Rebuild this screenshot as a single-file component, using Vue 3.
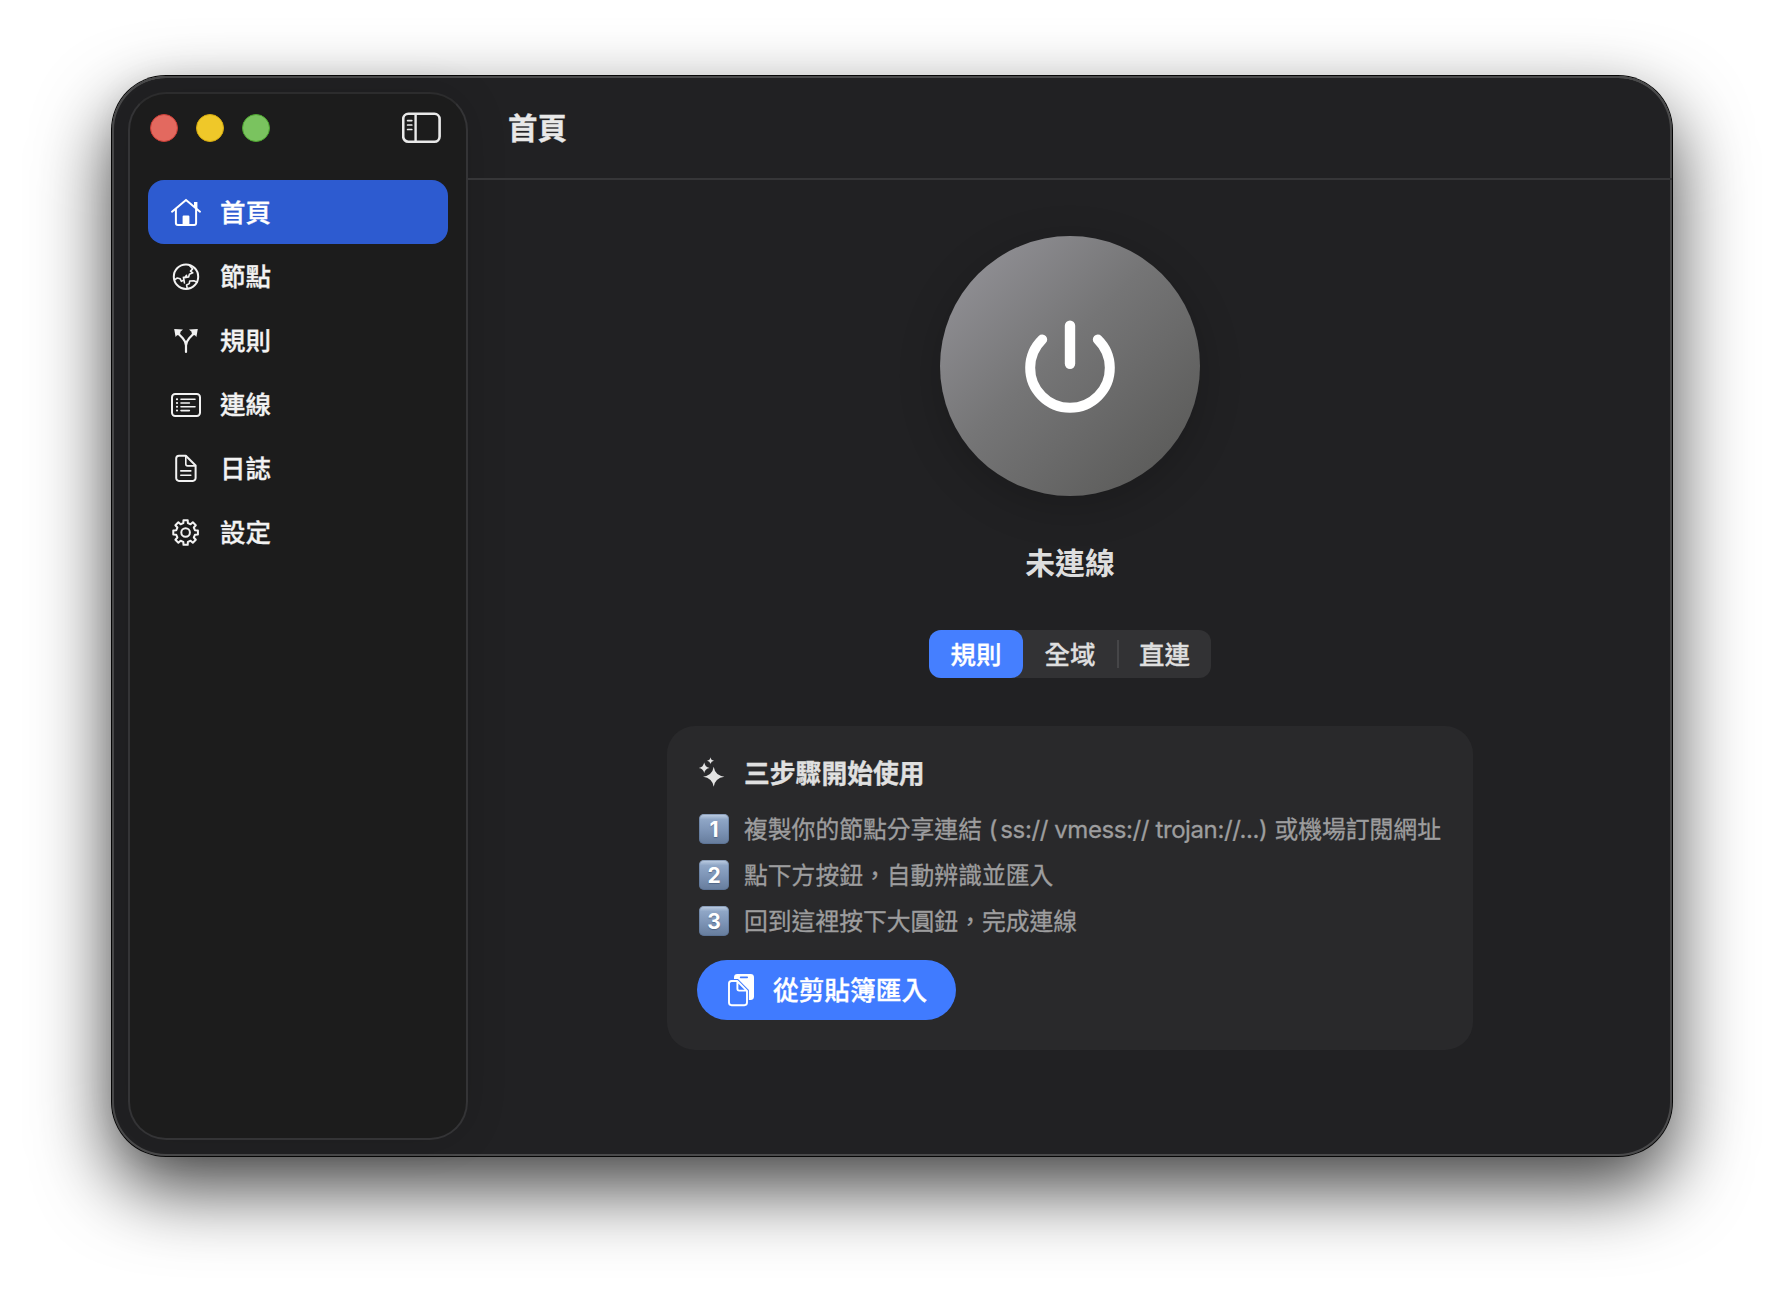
<template>
  <div class="desktop">
    <div class="window">
      <aside class="sidebar">
        <div class="sidebar-top">
          <div class="lights">
            <span class="light red"></span>
            <span class="light yellow"></span>
            <span class="light green"></span>
          </div>
          <button class="toggle-btn">
            <svg viewBox="0 0 40 32" width="40" height="32" fill="none" stroke="#e9e9e9">
              <rect x="1.2" y="1.8" width="36.400" height="28" rx="5.2" stroke-width="2.600" />
              <path d="M13.600 2v27.8" stroke-width="2.4" />
              <path d="M5.600 8.600h4.200M5.600 13h4.200M5.600 17.500h4.200" stroke-width="1.700" stroke-linecap="round" />
            </svg>
          </button>
        </div>

        <nav class="nav">
          <a
            v-for="item in navList"
            :key="item.key"
            class="nav-item"
            :class="{ active: item.key === activeNav }"
            @click="activeNav = item.key"
          >
            <svg class="nav-icon" viewBox="0 -0.5 32 32" width="32" height="32">
              <g v-if="item.key === 'home'">
                <path d="M2 15.2L16 3.4l14 11.800M5.900 12.600v13.800a2 2 0 0 0 2 2h16.2a2 2 0 0 0 2-2V12.600" />
                <path class="solid" d="M12.600 28V20a1 1 0 0 1 1-1h4.800a1 1 0 0 1 1 1v8zM24 5.600h3.400v7.400l-3.400-2.900z" />
              </g>
              <g v-else-if="item.key === 'nodes'">
                <circle cx="16" cy="16.200" r="12.200" />
                <path class="thin" d="M19.300 4.600l3.400 3.800-2.200 2.200 2.300 1.700-3.400 1.400-.8 2.700-4 .7 2-2.300" />
                <path class="thin" d="M4.400 19.400l2.900-1.900 2.800.7 1.300 2.600 2.600-1.300-.6-2.600M14 19.500l.4 3" />
                <path class="thin" d="M17.200 27.800l-.6-3.300 2.700-1.400.4-2.600 4.200-.3 3.200 1.500" />
              </g>
              <g v-else-if="item.key === 'rules'">
                <path class="bold" d="M16 27.400v-6.400c0-3.400-1-4.700-3.200-7.200L8.200 9M16 21c0-3.400 1-4.700 3.200-7.200L23.800 9" />
                <path class="solid" d="M4.200 4.600l8.800.5-2.800 2.500.4.8-2.600 2.500-.8-.4-1.600 1.900zM27.800 4.600l-8.800.5 2.800 2.500-.4.8 2.600 2.500.8-.4 1.600 1.900z" />
              </g>
              <g v-else-if="item.key === 'links'">
                <rect x="2" y="5.600" width="28" height="21.800" rx="3.200" />
                <path d="M11 10.700h14M11 14.500h8.400M11 18.300h14M11 22.100h8.400" class="thin" />
                <path d="M6.900 10.700h.2M6.900 14.500h.2M6.900 18.300h.2M6.900 22.100h.2" class="dots" />
              </g>
              <g v-else-if="item.key === 'logs'">
                <path d="M9 3.200h6.800L25.600 13v12.600a2.800 2.800 0 0 1-2.800 2.800H9a2.800 2.800 0 0 1-2.800-2.800V6A2.800 2.800 0 0 1 9 3.200z" />
                <path d="M15.800 3.600v8a1.800 1.800 0 0 0 1.800 1.800h7.800M10.800 18.400h10M10.800 22.800h10" class="thin" />
              </g>
              <g v-else>
                <path :d="gearPath" />
                <circle cx="15.600" cy="16" r="4.300" />
              </g>
            </svg>
            <span class="nav-label">{{ item.label }}</span>
          </a>
        </nav>
      </aside>

      <main class="main">
        <header class="toolbar">
          <h1>首頁</h1>
        </header>

        <section class="content">
          <button class="power-btn">
            <svg viewBox="0 0 100 100" width="100" height="100" fill="none" stroke="#fff" stroke-linecap="round">
              <path d="M22.200 23.500a39.800 39.800 0 1 0 55.600 0" stroke-width="10" />
              <path d="M50 9.800v38" stroke-width="10.400" />
            </svg>
          </button>

          <div class="status">未連線</div>

          <div class="segmented">
            <button
              v-for="mode in modes"
              :key="mode"
              class="segment"
              :class="{ selected: mode === currentMode }"
              @click="currentMode = mode"
            >{{ mode }}</button>
          </div>

          <div class="card">
            <div class="card-title">
              <svg viewBox="0 0 32 34" width="32" height="34" fill="#e4e4e4">
                <path d="M16.700 12.800q1.300 8.600 10.700 9.900-9.400 1.300-10.700 10.100Q15.400 24 6 22.700q9.400-1.300 10.700-9.900z" />
                <path d="M7.200 8.200q.7 5 5.400 5.700-4.700.7-5.400 5.100-.7-4.400-5.400-5.100 4.700-.7 5.400-5.700z" />
                <path d="M13.500 3.300q.4 3 3.500 3.500-3.100.5-3.500 3.400-.4-2.900-3.500-3.400 3.100-.5 3.500-3.500z" />
              </svg>
              <span>三步驟開始使用</span>
            </div>

            <div v-for="(step, index) in steps" :key="index" class="step">
              <span class="badge">{{ index + 1 }}</span>
              <span class="step-text"><span v-for="(part, i) in step" :key="i" :class="{ latin: i === 2 }">{{ part }}</span></span>
            </div>

            <button class="import-btn">
              <svg viewBox="0 0 30 36" width="30" height="36">
                <rect x="8" y="2" width="20" height="26" rx="3.400" fill="#fff" />
                <path d="M14.600 5.400h6.600" stroke="#407bff" stroke-width="1.600" stroke-linecap="round" />
                <path
                  d="M5.600 9h5.600l9.800 9.800v11.800a2.600 2.600 0 0 1-2.600 2.600H5.600A2.600 2.600 0 0 1 3 30.600v-19A2.600 2.600 0 0 1 5.600 9z"
                  fill="#407bff" stroke="#407bff" stroke-width="3.800"
                />
                <path
                  d="M5.600 9h5.600l9.800 9.800v11.800a2.600 2.600 0 0 1-2.600 2.600H5.600A2.600 2.600 0 0 1 3 30.600v-19A2.600 2.600 0 0 1 5.600 9zM11.400 9.400v7.400a1.800 1.800 0 0 0 1.800 1.800h7.400"
                  fill="none" stroke="#fff" stroke-width="1.900" stroke-linejoin="round"
                />
              </svg>
              <span class="import-label">從剪貼簿匯入</span>
            </button>
          </div>
        </section>
      </main>
    </div>
  </div>
</template>

<script setup>
import { ref } from 'vue'

const activeNav = ref('home')

const navList = [
  { key: 'home', label: '首頁' },
  { key: 'nodes', label: '節點' },
  { key: 'rules', label: '規則' },
  { key: 'links', label: '連線' },
  { key: 'logs', label: '日誌' },
  { key: 'settings', label: '設定' }
]

const modes = ['規則', '全域', '直連']
const currentMode = ref('規則')

const steps = [
  ['複製你的節點分享連結', ' (', 'ss:// vmess:// trojan://...', ') ', '或機場訂閱網址'],
  ['點下方按鈕，自動辨識並匯入'],
  ['回到這裡按下大圓鈕，完成連線']
]

// eight-tooth gear outline
const buildGear = (cx, cy, outer, inner) => {
  const points = []
  for (let i = 0; i < 8; i++) {
    const mid = (i * Math.PI) / 4 - Math.PI / 2
    const corners = [[-0.24, inner], [-0.17, outer], [0.17, outer], [0.24, inner]]
    corners.forEach(([offset, r]) => {
      const x = cx + r * Math.cos(mid + offset)
      const y = cy + r * Math.sin(mid + offset)
      points.push(`${x.toFixed(2)} ${y.toFixed(2)}`)
    })
  }
  return `M${points.join('L')}Z`
}

const gearPath = buildGear(15.6, 16, 12.5, 9.6)
</script>

<style>
body {
  background: #fff;
}
</style>

<style scoped>
.desktop {
  box-sizing: border-box;
  width: 1784px;
  height: 1304px;
  padding: 76px 112px 148px;
  overflow: hidden;
  background: #fff;
  font-family: Inter, "Noto Sans CJK TC", sans-serif;
  color: #fff;
}

button {
  border: none;
  padding: 0;
  margin: 0;
  background: none;
  font-family: inherit;
  color: inherit;
  cursor: pointer;
}

svg {
  display: block;
  flex-shrink: 0;
}

.window {
  box-sizing: border-box;
  display: flex;
  height: 1080px;
  border-radius: 54px;
  background: #212123;
  box-shadow:
    inset 0 0 0 2px #4a4a4b,
    inset 0 2px 0 0 #666867,
    0 0 0 1px #060606,
    0 32px 76px rgba(0, 0, 0, 0.75);
}

.sidebar {
  box-sizing: border-box;
  width: 340px;
  margin: 16px 0 16px 16px;
  padding: 0 18px;
  border: 2px solid #343436;
  border-top-color: #2c2c2d;
  border-radius: 38px;
  background: #1c1c1c;
  box-shadow: 0 0 40px rgba(0, 0, 0, 0.14);
}

.sidebar-top {
  display: flex;
  align-items: center;
  justify-content: space-between;
  height: 68px;
  padding: 0 6px 0 2px;
}

.lights {
  display: flex;
  gap: 18px;
}

.light {
  box-sizing: border-box;
  width: 28px;
  height: 28px;
  border-radius: 50%;
}

.red {
  background: #e3695f;
  border: 1px solid #cc3d36;
}

.yellow {
  background: #efc829;
  border: 1px solid #d6ab0f;
}

.green {
  background: #7ac35f;
  border: 1px solid #4da52f;
}

.nav {
  display: flex;
  flex-direction: column;
  margin: 18px -2px 0 0;
  width: 300px;
}

.nav-item {
  display: flex;
  align-items: center;
  gap: 18px;
  height: 64px;
  padding-left: 22px;
  border-radius: 16px;
  font-size: 25.5px;
  font-weight: 500;
  color: #f2f2f2;
  cursor: pointer;
}

.nav-item.active {
  background: #2d5bd0;
  color: #fff;
}

.nav-label {
  padding-bottom: 3px;
  -webkit-text-stroke: 0.3px currentColor;
}

.nav-icon {
  fill: none;
  stroke: currentColor;
  stroke-width: 2;
  stroke-linecap: round;
  stroke-linejoin: round;
}

.nav-icon .thin {
  stroke-width: 1.6;
}

.nav-icon .bold {
  stroke-width: 2.2;
}

.nav-icon .dots {
  stroke-width: 2;
}

.nav-icon .solid {
  fill: currentColor;
  stroke: none;
}

.main {
  flex: 1;
  display: flex;
  flex-direction: column;
  min-width: 0;
}

.toolbar {
  box-sizing: border-box;
  display: flex;
  align-items: center;
  height: 104px;
  padding-left: 40px;
  border-bottom: 2px solid #363638;
}

.toolbar h1 {
  margin: 0;
  padding-bottom: 2px;
  font-size: 29.5px;
  font-weight: 700;
  color: #e8e8e8;
  -webkit-text-stroke: 0.3px currentColor;
}

.content {
  display: flex;
  flex-direction: column;
  align-items: center;
  padding-top: 56px;
}

.power-btn {
  display: flex;
  align-items: center;
  justify-content: center;
  width: 260px;
  height: 260px;
  border-radius: 50%;
  background: linear-gradient(135deg, #98979d 0%, #757576 45%, #555553 100%);
  box-shadow: 0 10px 44px rgba(0, 0, 0, 0.2);
}

.status {
  margin-top: 45px;
  height: 44px;
  line-height: 44px;
  font-size: 29.8px;
  font-weight: 700;
  color: #dedede;
}

.segmented {
  display: flex;
  width: 282px;
  height: 48px;
  margin-top: 45px;
  border-radius: 12px;
  background: #323234;
}

.segment {
  display: flex;
  align-items: center;
  justify-content: center;
  flex: 1;
  padding-bottom: 3px;
  font-size: 25.5px;
  font-weight: 500;
  color: #dedede;
  -webkit-text-stroke: 0.3px currentColor;
}

.segment.selected {
  border-radius: 12px;
  background: #457fff;
  color: #fff;
}

.segment:last-child::before {
  content: '';
  width: 2px;
  height: 28px;
  margin: 3px 20px 0 -21px;
  background: #464648;
}

.card {
  box-sizing: border-box;
  width: 806px;
  height: 324px;
  margin-top: 48px;
  padding: 27px 30px 30px;
  border-radius: 28px;
  background: #29292b;
}

.card-title {
  display: flex;
  align-items: center;
  gap: 15px;
  height: 36px;
  margin-bottom: 17px;
  font-size: 25.8px;
  font-weight: 700;
  color: #e0e0e0;
  -webkit-text-stroke: 0.3px currentColor;
}

.step {
  display: flex;
  align-items: center;
  gap: 15px;
  height: 46px;
  padding-left: 2px;
}

.badge {
  display: flex;
  align-items: center;
  justify-content: center;
  flex-shrink: 0;
  width: 30px;
  height: 30px;
  border-radius: 5px;
  background: linear-gradient(#c3d2e6 0%, #8fa6c6 18%, #7d94b6 55%, #667c9c 100%);
  box-shadow: inset 0 0 0 1px rgba(80, 105, 140, 0.45);
  font-size: 21px;
  font-weight: 700;
  color: #fff;
  text-shadow: 0 1px 1px rgba(50, 70, 100, 0.5);
}

.step-text {
  padding-bottom: 4px;
  white-space: pre;
  font-size: 23.8px;
  color: #9d9d9e;
  -webkit-text-stroke: 0.3px currentColor;
}

.latin {
  margin-left: 3px;
  font-size: 24px;
  letter-spacing: -0.4px;
}

.import-btn {
  display: flex;
  align-items: center;
  gap: 17px;
  width: 259px;
  height: 60px;
  margin-top: 16px;
  padding-left: 29px;
  box-sizing: border-box;
  border-radius: 30px;
  background: #407bff;
  font-size: 25.7px;
  font-weight: 500;
  color: #fff;
}

.import-label {
  padding-bottom: 3px;
  white-space: nowrap;
  -webkit-text-stroke: 0.3px currentColor;
}
</style>
